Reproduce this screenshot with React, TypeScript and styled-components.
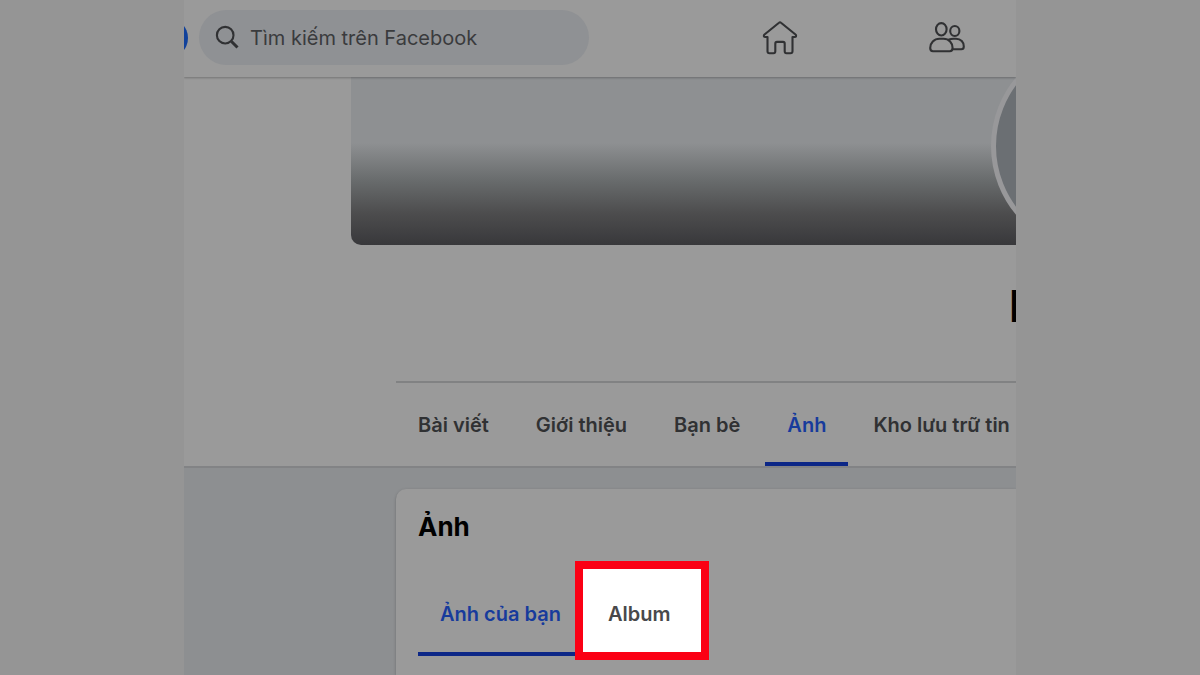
import React from "react";
import styled, { createGlobalStyle, css } from "styled-components";

const color = {
  gutter: "#959595",
  surface: "#9a9a9a",
  page: "#8d8f91",
  field: "#8f9194",
  line: "#818283",
  ink: "#303133",
  blue: "#173b9c",
  bar: "#0c2787",
  red: "#fb0014",
};

const GlobalStyle = createGlobalStyle`
  *, *::before, *::after { box-sizing: border-box; }
  body {
    margin: 0;
    background: ${color.gutter};
    color: ${color.ink};
    font-family: Inter, "Liberation Sans", sans-serif;
    -webkit-font-smoothing: antialiased;
  }
  button, input { font: inherit; color: inherit; }
`;

const Frame = styled.div`
  display: grid;
  grid-template-columns: 184px minmax(0, 1fr) 184px;
  height: 100vh;
  overflow: hidden;
`;

const Screen = styled.div`
  grid-column: 2;
  display: flex;
  flex-direction: column;
  background: ${color.page};
  overflow: hidden;
`;

const TopBar = styled.header`
  position: relative;
  z-index: 1;
  display: flex;
  align-items: center;
  flex: none;
  height: 77px;
  padding-bottom: 2px;
  background: ${color.surface};
  box-shadow: 0 1px 2px rgba(0, 0, 0, 0.25);
`;

const Logo = styled.a`
  flex: none;
  width: 40px;
  height: 40px;
  margin-left: -36px;
  margin-right: 11px;
  border-radius: 50%;
  background: #10419b;
`;

const Search = styled.label`
  display: flex;
  align-items: center;
  flex: none;
  gap: 10px;
  width: 390px;
  height: 55px;
  padding: 0 16px;
  border-radius: 28px;
  background: ${color.field};
`;

const SearchInput = styled.input`
  flex: 1;
  min-width: 0;
  padding: 0;
  border: 0;
  outline: 0;
  background: transparent;
  font-size: 20px;
  line-height: 28px;
  &::placeholder {
    color: #3a3b3d;
    opacity: 1;
  }
`;

const Shortcuts = styled.nav`
  display: flex;
  gap: 131px;
  margin-left: 173px;
`;

const Shortcut = styled.a`
  display: flex;
  flex: none;
  color: ${color.ink};
`;

const Profile = styled.section`
  flex: none;
  padding-left: 167px;
  background: ${color.surface};
  border-bottom: 2px solid #828385;
`;

const Cover = styled.div`
  position: relative;
  height: 168px;
  border-bottom-left-radius: 10px;
  background: linear-gradient(
    #8e9092 0,
    #8e9092 66px,
    #686b6c 104px,
    #4d4d4e 136px,
    #38383b 168px
  );
`;

const Avatar = styled.div`
  position: absolute;
  top: -38px;
  right: -189px;
  width: 214px;
  height: 214px;
  border: 5px solid #98989a;
  border-radius: 50%;
  background: #6b6f73;
`;

const NameRow = styled.div`
  display: flex;
  justify-content: flex-end;
  height: 136px;
  padding-top: 37px;
`;

const Name = styled.h1`
  width: 7px;
  margin: 0;
  color: #000;
  font-size: 44px;
  font-weight: 700;
  line-height: 48px;
`;

const ProfileTabs = styled.nav`
  display: flex;
  gap: 3px;
  margin-left: 45px;
  border-top: 2px solid ${color.line};
  overflow: hidden;
`;

const tab = css<{ $active?: boolean }>`
  flex: none;
  height: 83px;
  padding: 0 22px;
  border: 0;
  border-bottom: 4px solid ${(p) => (p.$active ? color.bar : "transparent")};
  background: transparent;
  color: ${(p) => (p.$active ? color.blue : color.ink)};
  font-size: 20px;
  font-weight: 600;
  white-space: nowrap;
`;

const ProfileTab = styled.a<{ $active?: boolean }>`
  ${tab}
  line-height: 84px;
  text-decoration: none;
`;

const Card = styled.main`
  flex: 1;
  margin: 21px 0 0 212px;
  padding: 20px 22px 0;
  border-top-left-radius: 10px;
  background: ${color.surface};
  box-shadow: 0 1px 3px rgba(0, 0, 0, 0.25);
`;

const CardTitle = styled.h2`
  margin: 0;
  color: #000;
  font-size: 26px;
  font-weight: 700;
  line-height: 36px;
`;

const AlbumTabs = styled.div`
  display: flex;
  gap: 3px;
  margin-top: 28px;
`;

const AlbumTab = styled.button<{ $active?: boolean; $marked?: boolean }>`
  ${tab}
  padding-top: 2px;
  line-height: 76px;
  ${(p) =>
    p.$marked &&
    css`
      position: relative;
      z-index: 0;
      color: #48494b;
      &::before {
        content: "";
        position: absolute;
        z-index: -1;
        inset: -12px -17px -8px -11px;
        border: 8px solid ${color.red};
        background: #fff;
      }
    `}
`;

const SearchIcon = () => (
  <svg width="25" height="25" viewBox="0 0 25 25" fill="none" stroke={color.ink} aria-hidden="true">
    <circle cx="10.2" cy="10.2" r="8.3" strokeWidth="2.1" />
    <path d="M16.5 16.5 22.5 22.5" strokeWidth="3" />
  </svg>
);

const HomeIcon = () => (
  <svg width="36" height="36" viewBox="0 0 36 36" fill="none" stroke="currentColor" strokeWidth="2.1" strokeLinecap="round" strokeLinejoin="round" aria-hidden="true">
    <path d="M17 2.7Q18 1.8 19 2.7L33.8 14.7Q34.8 17 32.6 17H30.5V31.2Q30.5 33.2 28.5 33.2H24.5Q22.7 33.2 22.7 31.2V23.7Q22.7 21.9 21 21.9H15Q13.3 21.9 13.3 23.7V31.2Q13.3 33.2 11.5 33.2H7.5Q5.5 33.2 5.5 31.2V17H3.4Q1.2 17 2.2 14.7Z" />
  </svg>
);

const FriendsIcon = () => (
  <svg width="36" height="36" viewBox="0 0 36 36" fill="none" stroke="currentColor" strokeWidth="2.1" strokeLinecap="round" strokeLinejoin="round" aria-hidden="true">
    <ellipse cx="12.3" cy="9.3" rx="5.3" ry="6.2" />
    <ellipse cx="25.8" cy="11" rx="4.6" ry="5" />
    <path d="M10.5 18.8H14.5C20 18.8 23.6 23 23.6 28Q23.6 31.2 20.7 31.2H4Q1.2 31.2 1.2 28C1.2 23 5 18.8 10.5 18.8Z" />
    <path d="M20 19.4Q22 18.8 24.5 18.8H27C32 18.8 34.8 22.3 34.8 26.4Q34.8 29.2 32.3 29.2H23.6" />
  </svg>
);

const profileTabs = ["Bài viết", "Giới thiệu", "Bạn bè", "Ảnh", "Kho lưu trữ tin"];

export default function App() {
  return (
    <>
      <GlobalStyle />
      <Frame>
        <Screen>
          <TopBar>
            <Logo href="#" aria-label="Facebook" />
            <Search>
              <SearchIcon />
              <SearchInput type="search" placeholder="Tìm kiếm trên Facebook" aria-label="Tìm kiếm trên Facebook" />
            </Search>
            <Shortcuts>
              <Shortcut href="#" aria-label="Trang chủ">
                <HomeIcon />
              </Shortcut>
              <Shortcut href="#" aria-label="Bạn bè">
                <FriendsIcon />
              </Shortcut>
            </Shortcuts>
          </TopBar>
          <Profile>
            <Cover>
              <Avatar />
            </Cover>
            <NameRow>
              <Name>I</Name>
            </NameRow>
            <ProfileTabs>
              {profileTabs.map((label) => (
                <ProfileTab key={label} href="#" $active={label === "Ảnh"}>
                  {label}
                </ProfileTab>
              ))}
            </ProfileTabs>
          </Profile>
          <Card>
            <CardTitle>Ảnh</CardTitle>
            <AlbumTabs>
              <AlbumTab type="button" $active>
                Ảnh của bạn
              </AlbumTab>
              <AlbumTab type="button" $marked>
                Album
              </AlbumTab>
            </AlbumTabs>
          </Card>
        </Screen>
      </Frame>
    </>
  );
}
